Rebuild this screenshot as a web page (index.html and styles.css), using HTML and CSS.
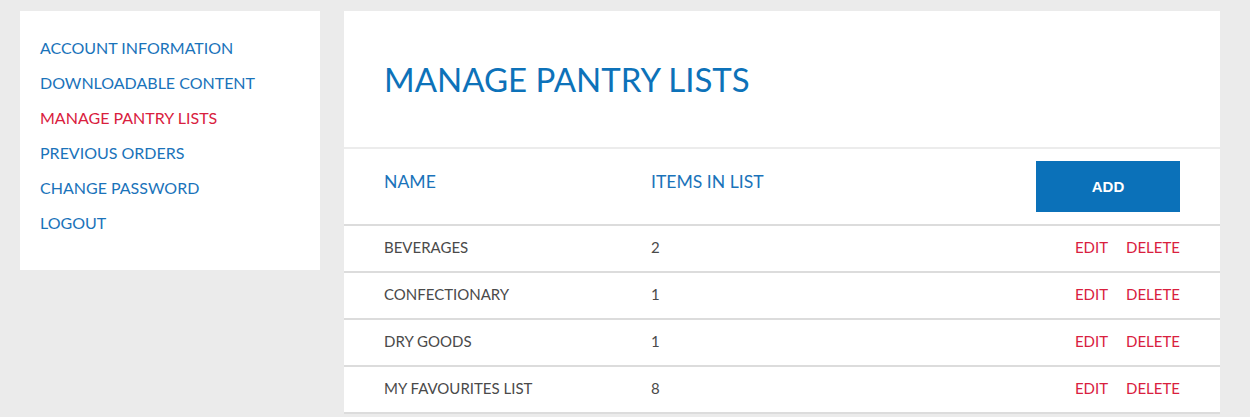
FILE: index.html
```html
<!DOCTYPE html>
<html lang="en">
<head>
<meta charset="utf-8">
<title>Manage Pantry Lists</title>
<link rel="stylesheet" href="styles.css">
</head>
<body>
<div class="page">
  <nav class="sidebar">
    <a class="nav-link" href="#">ACCOUNT INFORMATION</a>
    <a class="nav-link" href="#">DOWNLOADABLE CONTENT</a>
    <a class="nav-link active" href="#">MANAGE PANTRY LISTS</a>
    <a class="nav-link" href="#">PREVIOUS ORDERS</a>
    <a class="nav-link" href="#">CHANGE PASSWORD</a>
    <a class="nav-link" href="#">LOGOUT</a>
  </nav>
  <main class="panel">
    <h1 class="title">MANAGE PANTRY LISTS</h1>
    <div class="table-head">
      <div class="th">NAME</div>
      <div class="th">ITEMS IN LIST</div>
      <div class="th-action"><button class="btn-add">ADD</button></div>
    </div>
    <div class="row">
      <div class="cell">BEVERAGES</div>
      <div class="cell">2</div>
      <div class="actions"><a href="#">EDIT</a><a href="#">DELETE</a></div>
    </div>
    <div class="row">
      <div class="cell">CONFECTIONARY</div>
      <div class="cell">1</div>
      <div class="actions"><a href="#">EDIT</a><a href="#">DELETE</a></div>
    </div>
    <div class="row">
      <div class="cell">DRY GOODS</div>
      <div class="cell">1</div>
      <div class="actions"><a href="#">EDIT</a><a href="#">DELETE</a></div>
    </div>
    <div class="row">
      <div class="cell">MY FAVOURITES LIST</div>
      <div class="cell">8</div>
      <div class="actions"><a href="#">EDIT</a><a href="#">DELETE</a></div>
    </div>
  </main>
</div>
</body>
</html>
```
FILE: styles.css
```css
html, body {
  margin: 0;
  padding: 0;
  background: #ebebeb;
  font-family: Lato, "Open Sans", sans-serif;
}

.page {
  display: grid;
  grid-template-columns: 300px 876px;
  column-gap: 24px;
  align-items: start;
  padding: 11px 30px 0 20px;
}

.sidebar {
  background: #fff;
  padding: 19px 20px 30px;
  display: flex;
  flex-direction: column;
}

.nav-link {
  display: block;
  font-size: 16px;
  line-height: 35px;
  color: #1a73ba;
  text-decoration: none;
}

.nav-link.active {
  color: #d9203e;
}

.panel {
  background: #fff;
}

.title {
  margin: 0;
  padding: 47px 40px;
  font-size: 33px;
  line-height: 42px;
  font-weight: 400;
  color: #0d72b9;
  border-bottom: 2px solid #ececec;
}

.table-head {
  display: grid;
  grid-template-columns: 267px 1fr auto;
  padding: 0 40px;
  height: 75px;
  border-bottom: 2px solid #dcdcdc;
}

.th {
  padding-top: 23px;
  font-size: 17.6px;
  line-height: 20px;
  color: #1a73ba;
}

.th-action {
  padding-top: 12px;
}

.btn-add {
  display: block;
  width: 144px;
  height: 51px;
  border: 0;
  background: #0b71b9;
  color: #fff;
  font-family: "Liberation Sans", Arial, sans-serif;
  font-weight: 700;
  font-size: 15px;
  cursor: pointer;
}

.row {
  display: grid;
  grid-template-columns: 267px 1fr auto;
  padding: 0 40px 3px;
  height: 42px;
  align-items: center;
  border-bottom: 2px solid #dcdcdc;
  font-size: 15px;
  line-height: 40px;
}

.cell {
  color: #4a4a4a;
}

.actions {
  display: flex;
  gap: 18px;
}

.actions a {
  color: #d9203e;
  text-decoration: none;
}
```
